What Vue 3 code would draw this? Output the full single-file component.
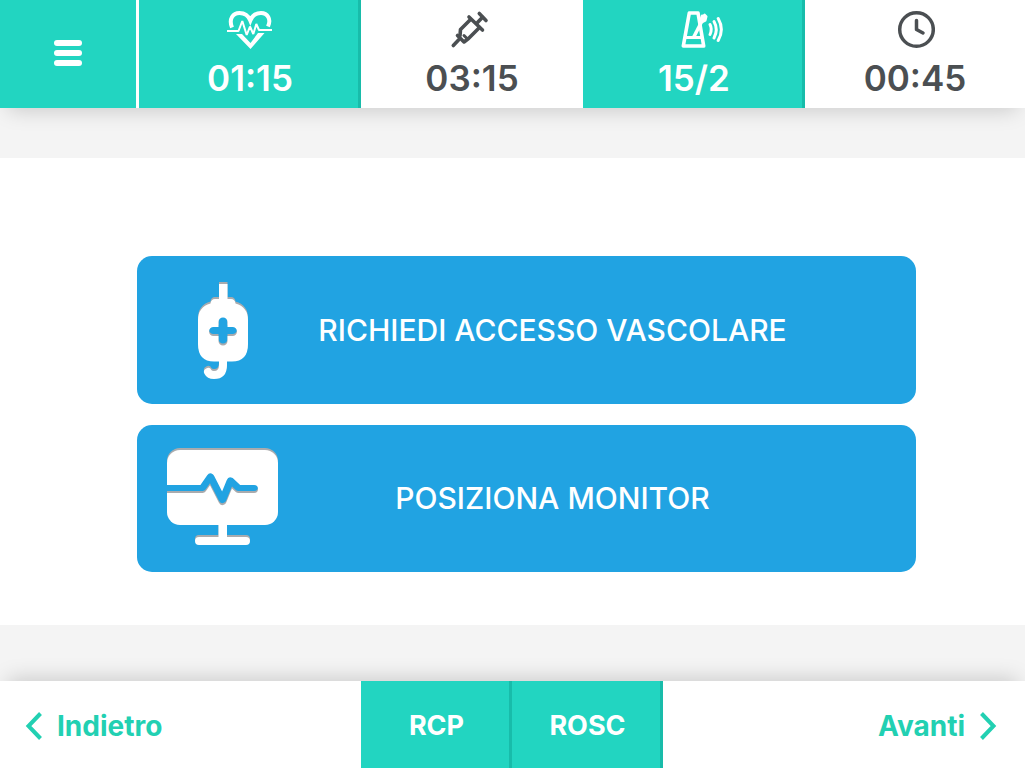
<script setup>
const timers = [
  { id: 'heart', value: '01:15', label: 'Massaggio', active: true },
  { id: 'syringe', value: '03:15', label: 'Farmaco', active: false },
  { id: 'metronome', value: '15/2', label: 'Metronomo', active: true },
  { id: 'clock', value: '00:45', label: 'Tempo', active: false }
]
</script>

<template>
  <div class="page">
    <header class="topbar">
      <button class="menu" type="button" aria-label="Menu">
        <span class="bar"></span>
        <span class="bar"></span>
        <span class="bar"></span>
      </button>
      <button
        v-for="t in timers"
        :key="t.id"
        type="button"
        class="timer"
        :class="{ active: t.active }"
        :aria-label="t.label + ' ' + t.value"
      >
        <svg v-if="t.id === 'heart'" class="icon" width="48" height="42" viewBox="0 0 48 42" aria-hidden="true">
          <path d="M6 18.500C2.500 10 7 4 13.500 4C18.500 4 22.500 7 24.300 11.500C26 7 30 4 35 4C41.500 4 45.500 10 42 17.500" fill="none" stroke="currentColor" stroke-width="4" />
          <path d="M10 25h6l8.500 9 7.500-10h6.500L24.500 40z" fill="currentColor" />
          <path d="M1 22H12.500L16.300 12L20.700 26L24 17.500L27.300 25L30.300 15L33 21H46" fill="none" stroke="currentColor" stroke-width="2" stroke-linejoin="bevel" />
        </svg>
        <svg v-else-if="t.id === 'syringe'" class="icon" width="44" height="42" viewBox="0 0 44 42" aria-hidden="true">
          <g fill="none" stroke="currentColor" stroke-width="3.600" stroke-linecap="round" stroke-linejoin="round">
            <path d="M3.300 36.500L8.500 31" />
            <path d="M7.500 26.500L14 33L18.500 29.500L29.500 18.500" />
            <path d="M20.500 10.500L10.500 20.500L10 26.500" />
            <path d="M14 26.500L16.500 29" stroke-width="3" />
            <path d="M19 8L32.500 21" />
            <path d="M27.500 13.500L32.500 8.300" />
            <path d="M29.300 4.500L36 11.500" />
          </g>
        </svg>
        <svg v-else-if="t.id === 'metronome'" class="icon" width="60" height="42" viewBox="-16 0 60 42" aria-hidden="true">
          <g fill="none" stroke="currentColor" stroke-width="3.600" stroke-linejoin="round">
            <path d="M9.300 4H18L23.700 37H3.300z" />
            <path d="M5 28.500H22" stroke-width="3" />
            <path d="M13.500 28.500L22 12" stroke-width="3.500" />
            <path d="M20.500 10.500L22 6.500L23.500 7L24.500 5.500L26.500 7.500L25.500 11.500L22.500 13z" fill="currentColor" stroke-width="2" />
            <path d="M30 15.500Q32.500 20 30 25.500" stroke-width="3" stroke-linecap="round" />
            <path d="M34 12.500Q38.500 20.500 34 29" stroke-width="3" stroke-linecap="round" />
            <path d="M38.200 9.500Q44.500 20.500 38.200 31.500" stroke-width="3" stroke-linecap="round" />
          </g>
        </svg>
        <svg v-else class="icon" width="40" height="42" viewBox="0 0 40 42" aria-hidden="true">
          <circle cx="21.500" cy="20.500" r="16.800" fill="none" stroke="currentColor" stroke-width="3.500" />
          <path d="M21.500 11.500V20.500L28 24" fill="none" stroke="currentColor" stroke-width="3.500" stroke-linecap="round" stroke-linejoin="round" />
        </svg>
        <span class="value">{{ t.value }}</span>
      </button>
    </header>

    <main class="content">
      <button class="action" type="button">
        <svg class="art" width="112" height="100" viewBox="0 0 112 100" aria-hidden="true">
          <mask id="bag-cut">
            <rect width="112" height="100" fill="#fff" />
            <path d="M56 42V61M46.500 51.500H65.500" stroke="#000" stroke-width="9" stroke-linecap="round" />
          </mask>
          <g mask="url(#bag-cut)">
            <path d="M52 4h8.500V19H64q4 0 4.500 4.500Q81 27 81 40V64Q81 81.500 65 81.500H47Q31 81.500 31 64V40Q31 27 43.500 23.500Q44 19 48 19h4z" fill="#fff" />
            <path d="M56 80V85Q56 95 47 95Q42.500 95 41 92" fill="none" stroke="#fff" stroke-width="8" stroke-linecap="round" />
          </g>
        </svg>
        <span class="label">RICHIEDI ACCESSO VASCOLARE</span>
      </button>
      <button class="action" type="button">
        <svg class="art" width="112" height="100" viewBox="0 0 112 100" aria-hidden="true">
          <mask id="monitor-cut">
            <rect width="112" height="100" fill="#fff" />
            <path d="M-4 41H35.500L43.500 29.500L55.500 53L63.500 33.500L71.500 41H87" fill="none" stroke="#000" stroke-width="8" stroke-linecap="round" stroke-linejoin="round" />
          </mask>
          <rect y="2" width="111" height="75" rx="13" fill="#fff" mask="url(#monitor-cut)" />
          <path d="M51.500 76h8.500V89h19a4 4 0 0 1 0 8H32a4 4 0 0 1 0-8h19.500z" fill="#fff" />
        </svg>
        <span class="label">POSIZIONA MONITOR</span>
      </button>
    </main>

    <footer class="bottombar">
      <button class="nav back" type="button">
        <svg width="18" height="30" viewBox="0 0 18 30" aria-hidden="true">
          <path d="M15.500 2.500L3.500 15L15.500 27.500" fill="none" stroke="currentColor" stroke-width="4" />
        </svg>
        <span>Indietro</span>
      </button>
      <div class="modes">
        <button class="mode" type="button">RCP</button>
        <button class="mode" type="button">ROSC</button>
      </div>
      <button class="nav next" type="button">
        <span>Avanti</span>
        <svg width="18" height="30" viewBox="0 0 18 30" aria-hidden="true">
          <path d="M2.500 2.500L14.500 15L2.500 27.500" fill="none" stroke="currentColor" stroke-width="4" />
        </svg>
      </button>
    </footer>
  </div>
</template>

<style>
body {
  margin: 0;
  background: #f4f4f4;
}
</style>

<style scoped>
.page {
  min-height: 100vh;
  display: flex;
  flex-direction: column;
  background: #f4f4f4;
  font-family: Inter, "Liberation Sans", sans-serif;
}
button {
  font: inherit;
  border: 0;
  margin: 0;
  padding: 0;
  background: none;
  color: inherit;
  cursor: pointer;
}
svg {
  display: block;
  flex: none;
}
.topbar {
  display: grid;
  grid-template-columns: 139px 222fr 222fr 222fr 220fr;
  height: 108px;
  background: #fff;
  box-shadow: 0 10px 20px -8px rgba(0, 0, 0, 0.18);
}
.menu {
  display: flex;
  flex-direction: column;
  align-items: center;
  justify-content: center;
  gap: 4px;
  margin-right: 3px;
  padding-bottom: 2px;
  background: #22d5c1;
}
.bar {
  width: 28px;
  height: 6px;
  border-radius: 3px;
  background: #fff;
}
.timer {
  display: flex;
  flex-direction: column;
  align-items: center;
  padding-top: 9px;
  color: #4b4f52;
}
.timer.active {
  background: #22d5c1;
  box-shadow: inset -3px 0 #18bcaa;
  color: #fff;
}
.value {
  margin-top: 5px;
  font-size: 35px;
  line-height: 44px;
  font-weight: 600;
}
.content {
  flex: 1;
  display: flex;
  flex-direction: column;
  gap: 21px;
  margin: 50px 0 56px;
  padding: 98px 109px 53px 137px;
  background: #fff;
}
.action {
  flex: 1;
  min-height: 147px;
  display: flex;
  align-items: center;
  padding: 0 90px 0 30px;
  border-radius: 15px;
  background: #21a3e2;
  color: #fff;
}
.art {
  filter: drop-shadow(0 -2px 0 #a9abae);
}
.label {
  flex: 1;
  text-align: center;
  font-size: 30px;
  line-height: 40px;
  font-weight: 500;
  white-space: nowrap;
}
.bottombar {
  display: grid;
  grid-template-columns: 361fr 302fr 362fr;
  height: 87px;
  background: #fff;
  box-shadow: 0 -10px 20px -8px rgba(0, 0, 0, 0.18);
  font-size: 28px;
  line-height: 36px;
  font-weight: 700;
}
.nav {
  display: flex;
  align-items: center;
  gap: 14px;
  padding: 2px 25px 0 25px;
  color: #22d0b2;
}
.next {
  justify-content: flex-end;
  padding-right: 28px;
}
.modes {
  display: grid;
  grid-template-columns: 1fr 1fr;
}
.mode {
  padding-top: 2px;
  background: #22d5c1;
  box-shadow: inset -3px 0 #18bcaa;
  color: #fff;
  font-size: 27px;
}
</style>
